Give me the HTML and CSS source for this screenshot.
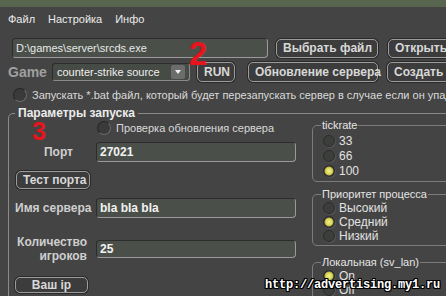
FILE: index.html
```html
<!DOCTYPE html>
<html>
  <head>
    <meta charset="utf-8">
    <title>SRCDS Launcher</title>
    <link rel="stylesheet" href="styles.css">
  </head>
  <body>
    <div class="app">
      <div class="titlebar"></div>
      <nav class="menu">
        <span>Файл</span>
        <span>Настройка</span>
        <span>Инфо</span>
      </nav>

      <div class="toolbar">
        <div class="row row-file">
          <input class="field field-path" value="D:\games\server\srcds.exe">
          <button class="btn btn-file">Выбрать файл</button>
          <button class="btn btn-open">Открыть</button>
        </div>
        <div class="row row-game">
          <span class="game-label">Game</span>
          <div class="select">counter-strike source<span class="select-arrow"></span></div>
          <button class="btn btn-run">RUN</button>
          <button class="btn btn-update">Обновление сервера</button>
          <button class="btn btn-create">Создать</button>
        </div>
        <label class="check check-bat"><span class="check-box"></span>Запускать *.bat файл, который будет перезапускать сервер в случае если он упадет</label>
      </div>

      <fieldset class="group">
        <legend>Параметры запуска</legend>
        <div class="group-body">
          <div class="form">
            <label class="check check-update"><span class="check-box"></span>Проверка обновления сервера</label>
            <div class="form-row">
              <span class="form-label label-port">Порт</span>
              <input class="field" value="27021">
            </div>
            <button class="btn btn-test">Тест порта</button>
            <div class="form-row">
              <span class="form-label">Имя сервера</span>
              <input class="field" value="bla bla bla">
            </div>
            <div class="form-row row-count">
              <span class="form-label label-count">Количество<br>игроков</span>
              <input class="field field-count" value="25">
            </div>
            <button class="btn btn-ip">Ваш ip</button>
          </div>

          <div class="side">
            <fieldset class="sub sub-tick">
              <legend>tickrate</legend>
              <label class="radio"><span class="dot"></span>33</label>
              <label class="radio"><span class="dot"></span>66</label>
              <label class="radio"><span class="dot on"></span>100</label>
            </fieldset>
            <fieldset class="sub sub-prio">
              <legend>Приоритет процесса</legend>
              <label class="radio"><span class="dot"></span>Высокий</label>
              <label class="radio"><span class="dot on"></span>Средний</label>
              <label class="radio"><span class="dot"></span>Низкий</label>
            </fieldset>
            <fieldset class="sub sub-lan">
              <legend>Локальная (sv_lan)</legend>
              <label class="radio"><span class="dot on"></span>On</label>
              <label class="radio"><span class="dot"></span>Off</label>
            </fieldset>
          </div>
        </div>
      </fieldset>

      <span class="mark mark-2">2</span>
      <span class="mark mark-3">3</span>
      <div class="watermark">http://advertising.my1.ru</div>
    </div>
  </body>
</html>
```

FILE: styles.css
```css
* {
  margin: 0;
  padding: 0;
  box-sizing: border-box;
}

body {
  background-color: #444444;
  overflow: hidden;
}

.app {
  position: relative;
  width: 560px;
  height: 296px;
  overflow: hidden;
  font-family: "Liberation Sans", Arial, sans-serif;
  font-size: 11px;
  color: #e4e4e4;
}

.titlebar {
  height: 7px;
  background-color: #59664f;
}

.menu {
  display: flex;
  align-items: center;
  gap: 13px;
  height: 24px;
  padding-left: 8px;
  color: #ececec;
}

.toolbar {
  padding: 7px 0 0 8px;
}

.row {
  display: flex;
  align-items: center;
}

.row-game {
  margin-top: 4px;
}

/* inputs */

.field {
  width: 200px;
  height: 20px;
  padding-left: 3px;
  font-family: "Liberation Sans", Arial, sans-serif;
  font-size: 12px;
  font-weight: bold;
  color: #f2f2f2;
  background-color: #4a5049;
  border: 1px solid #9a9a9a;
  border-top-color: #2c2c2c;
  border-left-color: #2c2c2c;
  border-radius: 4px;
  outline: none;
}

.field-path {
  width: 256px;
  margin-left: 4px;
  font-size: 11px;
  font-weight: normal;
  color: #e8e8e8;
}

.field-count {
  height: 18px;
}

/* buttons */

.btn {
  height: 19px;
  padding: 0 6px;
  font-family: "Liberation Sans", Arial, sans-serif;
  font-size: 12px;
  font-weight: bold;
  color: #d8d8d8;
  background-color: #3c3c3c;
  border: 1px solid #9c9c9c;
  border-radius: 5px;
  box-shadow: 0 0 0 1px #2a2a2a;
  white-space: nowrap;
}

.btn-file {
  width: 102px;
  margin-left: 8px;
}

.btn-open {
  width: 80px;
  margin-left: 10px;
  text-align: left;
}

.game-label {
  width: 44px;
  font-size: 14px;
  font-weight: bold;
  color: #a0a0a0;
}

.select {
  position: relative;
  width: 138px;
  height: 18px;
  padding-left: 4px;
  line-height: 16px;
  color: #f0f0f0;
  background-color: #464b45;
  border: 1px solid #8a8a8a;
  border-top-color: #2c2c2c;
  border-left-color: #2c2c2c;
  border-radius: 3px;
}

.select-arrow {
  position: absolute;
  right: 4px;
  top: 1px;
  width: 14px;
  height: 14px;
  background-color: #6c6c6c;
  border-radius: 2px;
}

.select-arrow:after {
  content: '';
  position: absolute;
  left: 4px;
  top: 5px;
  border-left: 3px solid transparent;
  border-right: 3px solid transparent;
  border-top: 4px solid #f0f0f0;
}

.btn-run {
  width: 38px;
  height: 20px;
  margin-left: 7px;
}

.btn-update {
  width: 130px;
  height: 20px;
  margin-left: 13px;
}

.btn-create {
  width: 80px;
  height: 20px;
  margin-left: 9px;
  text-align: left;
}

/* round checkboxes */

.check {
  display: flex;
  align-items: center;
  gap: 5px;
  height: 16px;
  color: #dadada;
  white-space: nowrap;
}

.check-bat {
  margin: 5px 0 0 5px;
}

.check-box {
  flex: none;
  width: 14px;
  height: 14px;
  border-radius: 50%;
  background-color: #3a3a3a;
  border: 1px solid #6a6a6a;
  border-top-color: #262626;
  border-left-color: #262626;
}

/* main group */

.group {
  width: 540px;
  margin: 3px 0 0 8px;
  padding: 0 0 0 6px;
  border: 1px solid #8a8a8a;
  border-radius: 5px;
}

.group > legend {
  padding: 0 3px;
  font-size: 12px;
  font-weight: bold;
  line-height: 14px;
  color: #ececec;
}

.group-body {
  display: flex;
  gap: 16px;
}

.form {
  flex: none;
  width: 281px;
  padding-top: 1px;
}

.check-update {
  height: 14px;
  margin-left: 82px;
}

.form-row {
  display: flex;
  align-items: center;
  gap: 5px;
  margin-top: 7px;
}

.form-label {
  flex: none;
  width: 76px;
  font-size: 12px;
  font-weight: bold;
  line-height: 14px;
  text-align: right;
  white-space: nowrap;
  color: #cfcfcf;
}

.label-port {
  padding-right: 18px;
}

.label-count {
  padding-right: 4px;
}

.btn-test {
  display: block;
  width: 74px;
  height: 18px;
  margin: 9px 0 0 1px;
}

.btn-test + .form-row {
  margin-top: 9px;
}

.row-count {
  margin-top: 17px;
}

.btn-ip {
  display: block;
  width: 73px;
  height: 16px;
  margin-top: 14px;
  line-height: 13px;
}

/* radio groups */

.side {
  width: 150px;
}

.sub {
  padding: 0 0 2px 10px;
  border: 1px solid #7c7c7c;
  border-radius: 5px;
}

.sub legend {
  margin-left: -2px;
  padding: 0 1px;
  line-height: 13px;
  color: #e6e6e6;
}

.sub-tick {
  margin-top: -1px;
  padding-top: 1px;
  padding-bottom: 3px;
}

.sub-tick .radio {
  height: 15px;
}

.sub-prio {
  margin-top: 6px;
}

.sub-lan {
  margin-top: 10px;
  height: 60px;
}

.radio {
  display: flex;
  align-items: center;
  gap: 4px;
  height: 14px;
  font-size: 12px;
  color: #e2e2e2;
}

.dot {
  flex: none;
  width: 12px;
  height: 12px;
  border-radius: 50%;
  background-color: #3b3e3a;
  border: 1px solid #2c2c2c;
  box-shadow: 1px 1px 0 #555555;
}

.dot.on {
  background: radial-gradient(circle, #f2f08a 0, #dcd858 3px, #b8b440 4px, #2a2a3c 5px);
}

/* overlays */

.mark {
  position: absolute;
  font-weight: bold;
  color: #e8141c;
}

.mark-2 {
  left: 189px;
  top: 42px;
  font-size: 33px;
  line-height: 24px;
}

.mark-3 {
  left: 32px;
  top: 122px;
  font-size: 25px;
  line-height: 18px;
}

.watermark {
  position: absolute;
  left: 265px;
  top: 278px;
  font-family: "Liberation Mono", monospace;
  font-size: 12px;
  font-weight: bold;
  letter-spacing: -0.2px;
  color: #ffffff;
  text-shadow: 1px 0 0 #000, -1px 0 0 #000, 0 1px 0 #000, 0 -1px 0 #000, 1px 1px 0 #000, -1px -1px 0 #000, 1px -1px 0 #000, -1px 1px 0 #000;
}
```
